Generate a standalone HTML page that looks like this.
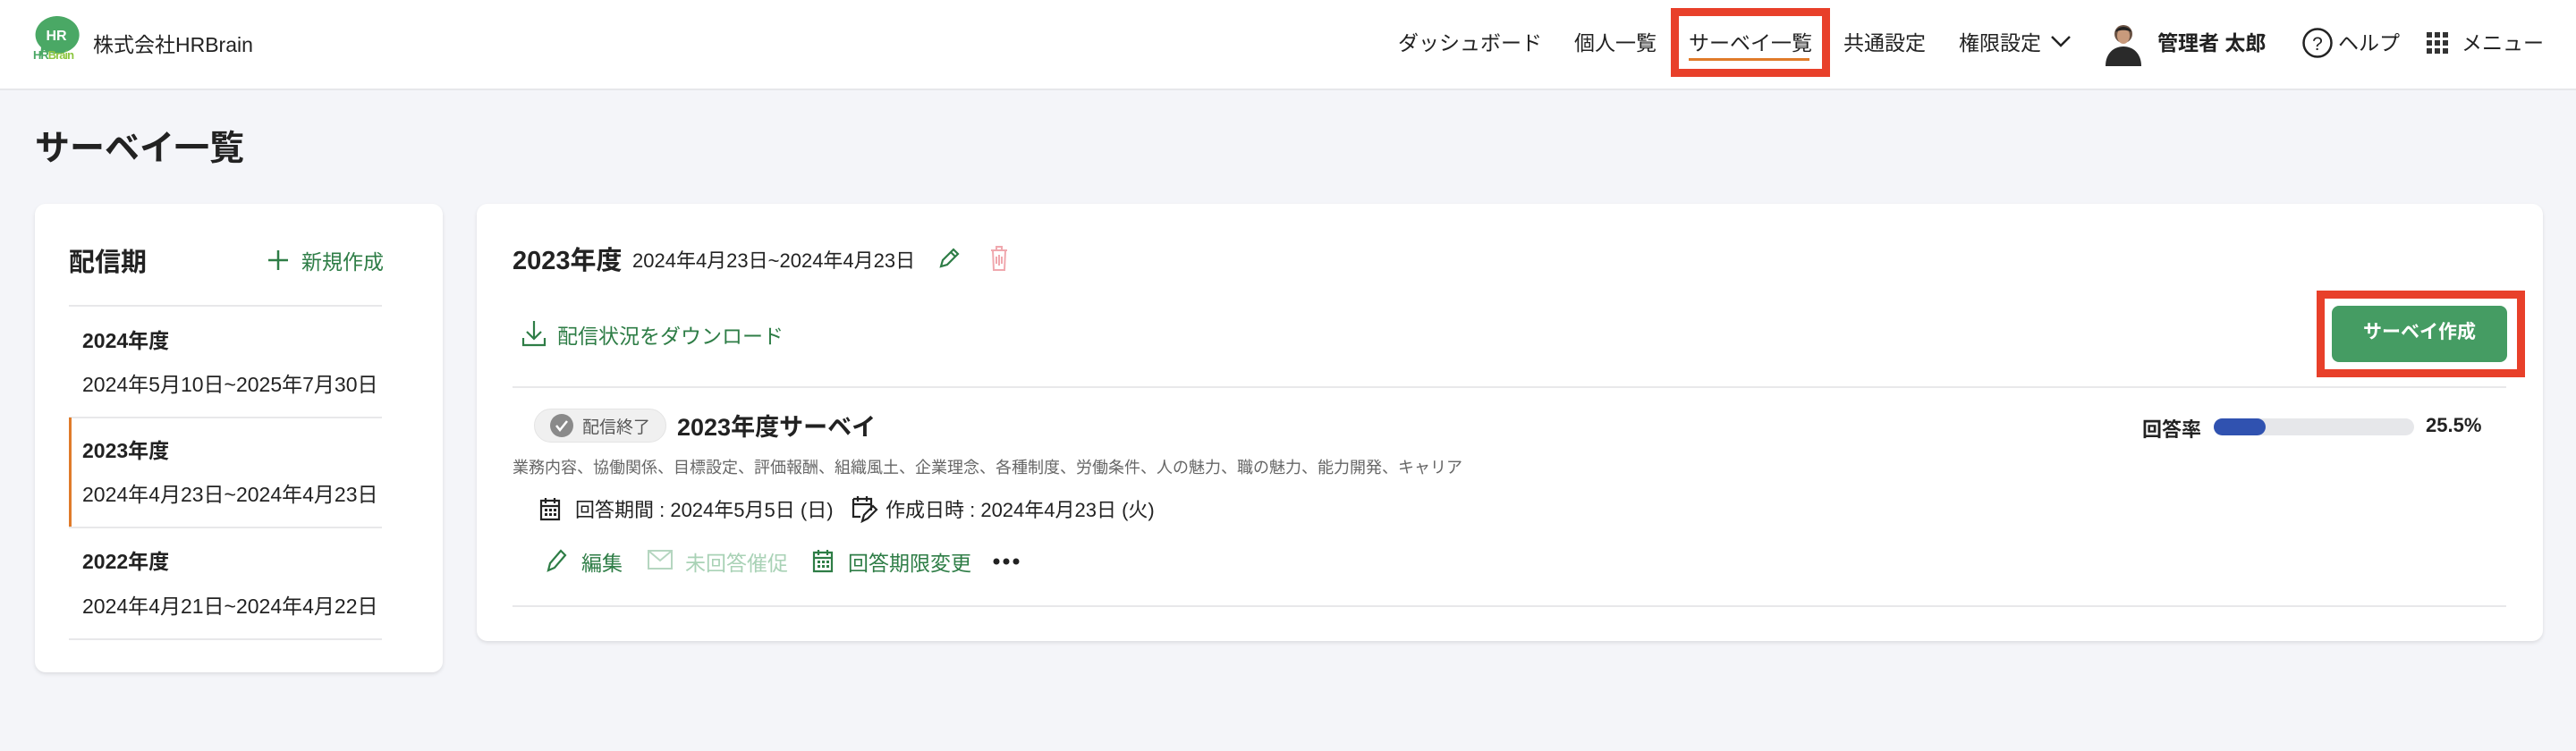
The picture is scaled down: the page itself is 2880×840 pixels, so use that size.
<!DOCTYPE html>
<html><head><meta charset="utf-8"><style>
*{box-sizing:border-box;margin:0;padding:0}
body{width:2880px;height:840px;background:#f4f5f9;font-family:"Liberation Sans","Noto Sans CJK JP",sans-serif;color:#222;position:relative;overflow:hidden}
.a{position:absolute;white-space:nowrap}
.hdr{position:absolute;left:0;top:0;width:2880px;height:101px;background:#fff;border-bottom:2px solid #e6e7ea}
.nav{font-size:23px;color:#222;top:29px}
.card{position:absolute;background:#fff;border-radius:12px;box-shadow:0 2px 4px rgba(0,0,0,.1)}
.hr{position:absolute;height:2px;background:#e8e8ea}
.g{color:#2e7d46}
</style></head><body>
<div class="hdr"></div>
<svg class="a" style="left:36px;top:16px" width="54" height="54" viewBox="0 0 54 54">
<path d="M27 2a25 21 0 1 1-14 38l-4 8 1-11A25 21 0 0 1 27 2z" fill="#4aa865"/>
<text x="27" y="29" font-size="16" font-weight="bold" fill="#fff" text-anchor="middle" font-family="Liberation Sans">HR</text>
</svg>
<div class="a" style="left:37px;top:54px;font-size:13px;font-weight:bold;color:#4aa865;letter-spacing:-1px">HR<span style="color:#8cc63f">Brain</span></div>
<div class="a" style="left:104px;top:31px;font-size:23px">株式会社HRBrain</div>

<div class="a nav" style="left:1563px">ダッシュボード</div>
<div class="a nav" style="left:1760px">個人一覧</div>
<div class="a" style="left:1868px;top:9px;width:178px;height:77px;border:9px solid #e8402a"></div>
<div class="a nav" style="left:1888px">サーベイ一覧</div>
<div class="a" style="left:1888px;top:65px;width:135px;height:3px;background:#e07b2a"></div>
<div class="a nav" style="left:2061px">共通設定</div>
<div class="a nav" style="left:2190px">権限設定</div>
<svg class="a" style="left:2292px;top:38px" width="24" height="16" viewBox="0 0 24 16"><path d="M2 3l10 10 10-10" stroke="#222" stroke-width="2.5" fill="none"/></svg>
<svg class="a" style="left:2348px;top:22px" width="52" height="52" viewBox="0 0 52 52"><circle cx="26" cy="16" r="10" fill="#6b5344"/><path d="M6 52c0-14 9-22 20-22s20 8 20 22z" fill="#2a2a2a"/><ellipse cx="26" cy="18" rx="7" ry="9" fill="#c89a7c"/><path d="M17 14c2-8 16-8 18 0-4-3-14-3-18 0z" fill="#222"/></svg>
<div class="a nav" style="left:2412px;font-weight:bold">管理者 太郎</div>
<svg class="a" style="left:2573px;top:30px" width="36" height="36" viewBox="0 0 36 36"><circle cx="18" cy="18" r="15.5" stroke="#222" stroke-width="2.5" fill="none"/><text x="18" y="26" font-size="21" text-anchor="middle" fill="#222" font-family="Liberation Sans">?</text></svg>
<div class="a nav" style="left:2614px">ヘルプ</div>
<svg class="a" style="left:2713px;top:36px" width="24" height="24" viewBox="0 0 24 24" fill="#333"><rect x="0" y="0" width="6" height="6"/><rect x="9" y="0" width="6" height="6"/><rect x="18" y="0" width="6" height="6"/><rect x="0" y="9" width="6" height="6"/><rect x="9" y="9" width="6" height="6"/><rect x="18" y="9" width="6" height="6"/><rect x="0" y="18" width="6" height="6"/><rect x="9" y="18" width="6" height="6"/><rect x="18" y="18" width="6" height="6"/></svg>
<div class="a nav" style="left:2752px">メニュー</div>

<div class="a" style="left:39px;top:135px;font-size:39px;font-weight:bold">サーベイ一覧</div>

<div class="card" style="left:39px;top:228px;width:456px;height:524px"></div>
<div class="a" style="left:77px;top:270px;font-size:29px;font-weight:bold">配信期</div>
<svg class="a" style="left:299px;top:279px" width="24" height="24" viewBox="0 0 24 24"><path d="M12 1v22M1 12h22" stroke="#2e7d46" stroke-width="2.5"/></svg>
<div class="a g" style="left:337px;top:274px;font-size:23px">新規作成</div>
<div class="hr" style="left:77px;top:341px;width:350px"></div>
<div class="a" style="left:92px;top:362px;font-size:23px;font-weight:bold">2024年度</div>
<div class="a" style="left:92px;top:411px;font-size:23px">2024年5月10日~2025年7月30日</div>
<div class="hr" style="left:77px;top:466px;width:350px"></div>
<div class="a" style="left:77px;top:467px;width:3px;height:124px;background:#e07b2a"></div>
<div class="a" style="left:92px;top:485px;font-size:23px;font-weight:bold">2023年度</div>
<div class="a" style="left:92px;top:534px;font-size:23px">2024年4月23日~2024年4月23日</div>
<div class="hr" style="left:77px;top:589px;width:350px"></div>
<div class="a" style="left:92px;top:609px;font-size:23px;font-weight:bold">2022年度</div>
<div class="a" style="left:92px;top:659px;font-size:23px">2024年4月21日~2024年4月22日</div>
<div class="hr" style="left:77px;top:714px;width:350px"></div>

<div class="card" style="left:533px;top:228px;width:2310px;height:489px"></div>
<div class="a" style="left:573px;top:268px;font-size:29px;font-weight:bold">2023年度</div>
<div class="a" style="left:707px;top:274px;font-size:22px">2024年4月23日~2024年4月23日</div>
<svg class="a" style="left:1048px;top:276px" width="26" height="26" viewBox="0 0 26 26"><path d="M4 22l2-7L18 3l5 5-12 12z M15 6l5 5" stroke="#2e7d46" stroke-width="2.2" fill="none"/></svg>
<svg class="a" style="left:1106px;top:274px" width="22" height="30" viewBox="0 0 22 30"><path d="M2 6h18M8 6V2h6v4M4 6l1 22h12l1-22M11 11v12M8 13v8M14 13v8" stroke="#f0a8ae" stroke-width="2" fill="none"/></svg>
<svg class="a" style="left:583px;top:358px" width="28" height="30" viewBox="0 0 28 30"><path d="M14 1v20M6 13l8 8 8-8M2 20v8h24v-8" stroke="#2e7d46" stroke-width="2.2" fill="none"/></svg>
<div class="a g" style="left:623px;top:357px;font-size:23px">配信状況をダウンロード</div>
<div class="a" style="left:2590px;top:325px;width:233px;height:97px;background:#e8402a"></div>
<div class="a" style="left:2599px;top:334px;width:215px;height:79px;background:#fff"></div>
<div class="a" style="left:2607px;top:342px;width:196px;height:63px;background:#459c63;border-radius:8px;color:#fff;font-size:21px;font-weight:bold;text-align:center;line-height:60px">サーベイ作成</div>
<div class="hr" style="left:573px;top:432px;width:2229px"></div>

<div class="a" style="left:597px;top:457px;width:148px;height:38px;background:#f0f0f0;border:1px solid #e4e4e4;border-radius:19px"></div>
<svg class="a" style="left:614px;top:462px" width="28" height="28" viewBox="0 0 28 28"><circle cx="14" cy="14" r="13" fill="#8a8a8a"/><path d="M8 14l4 5 8-10" stroke="#fff" stroke-width="2.5" fill="none"/></svg>
<div class="a" style="left:651px;top:463px;font-size:19px;color:#555">配信終了</div>
<div class="a" style="left:757px;top:456px;font-size:27px;font-weight:bold">2023年度サーベイ</div>
<div class="a" style="left:2395px;top:463px;font-size:22px;font-weight:bold">回答率</div>
<div class="a" style="left:2475px;top:468px;width:224px;height:19px;background:#e6e7ea;border-radius:10px"></div>
<div class="a" style="left:2475px;top:468px;width:58px;height:19px;background:#3052b0;border-radius:10px"></div>
<div class="a" style="left:2712px;top:463px;font-size:22px;font-weight:bold">25.5%</div>
<div class="a" style="left:573px;top:509px;font-size:18px;color:#666">業務内容、協働関係、目標設定、評価報酬、組織風土、企業理念、各種制度、労働条件、人の魅力、職の魅力、能力開発、キャリア</div>

<svg class="a" style="left:603px;top:555px" width="24" height="28" viewBox="0 0 24 28"><path d="M2 5h20v21H2zM2 11h20M7 2v6M17 2v6" stroke="#222" stroke-width="2.2" fill="none"/><g fill="#222"><rect x="6" y="14" width="3" height="3"/><rect x="11" y="14" width="3" height="3"/><rect x="16" y="14" width="3" height="3"/><rect x="6" y="19" width="3" height="3"/><rect x="11" y="19" width="3" height="3"/><rect x="16" y="19" width="3" height="3"/></g></svg>
<div class="a" style="left:643px;top:553px;font-size:22px">回答期間 : 2024年5月5日 (日)</div>
<svg class="a" style="left:952px;top:553px" width="32" height="32" viewBox="0 0 32 32"><path d="M2 5h20v13M2 5v20h8M2 11h20M7 2v6M17 2v6M12 30l2-7 10-10 4 4-10 10z" stroke="#222" stroke-width="2.2" fill="none"/></svg>
<div class="a" style="left:990px;top:553px;font-size:22px">作成日時 : 2024年4月23日 (火)</div>

<svg class="a" style="left:610px;top:613px" width="26" height="28" viewBox="0 0 26 28"><path d="M3 25l2-8L17 3l5 5L10 22z" stroke="#2e7d46" stroke-width="2.2" fill="none"/></svg>
<div class="a g" style="left:650px;top:611px;font-size:23px">編集</div>
<svg class="a" style="left:724px;top:615px" width="28" height="22" viewBox="0 0 28 22"><path d="M1 1h26v20H1zM1 1l13 11L27 1" stroke="#b5d6c0" stroke-width="2" fill="none"/></svg>
<div class="a" style="left:766px;top:611px;font-size:23px;color:#a9d2b6">未回答催促</div>
<svg class="a" style="left:908px;top:613px" width="24" height="28" viewBox="0 0 24 28"><path d="M2 5h20v21H2zM2 11h20M7 2v6M17 2v6" stroke="#2e7d46" stroke-width="2.2" fill="none"/><g fill="#2e7d46"><rect x="6" y="14" width="3" height="3"/><rect x="11" y="14" width="3" height="3"/><rect x="16" y="14" width="3" height="3"/><rect x="6" y="19" width="3" height="3"/><rect x="11" y="19" width="3" height="3"/><rect x="16" y="19" width="3" height="3"/></g></svg>
<div class="a g" style="left:948px;top:611px;font-size:23px">回答期限変更</div>
<svg class="a" style="left:1110px;top:623px" width="30" height="10" viewBox="0 0 30 10" fill="#222"><circle cx="4" cy="5" r="3.5"/><circle cx="15" cy="5" r="3.5"/><circle cx="26" cy="5" r="3.5"/></svg>
<div class="hr" style="left:573px;top:677px;width:2229px"></div>
</body></html>
